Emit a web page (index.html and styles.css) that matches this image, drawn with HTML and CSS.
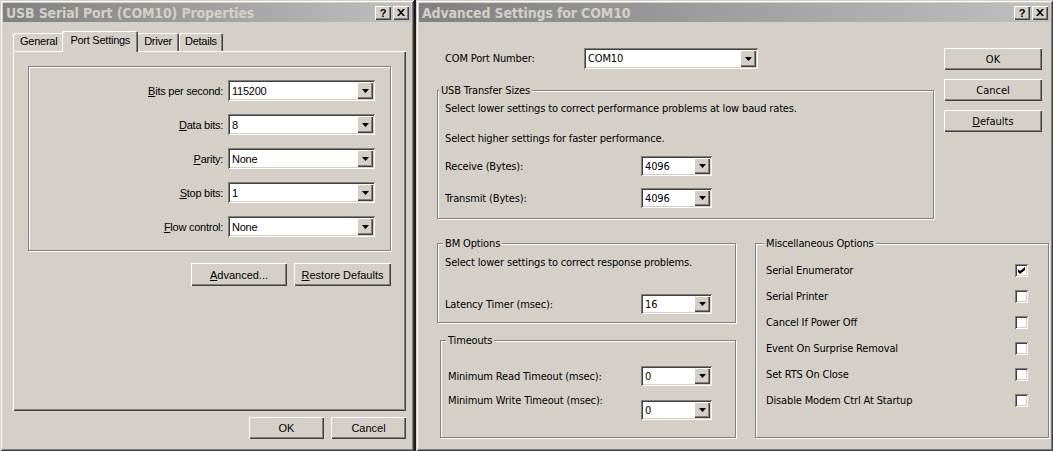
FILE: index.html
```html
<!DOCTYPE html>
<html lang="en">
<head>
  <meta charset="UTF-8">
  <title>USB Serial Port (COM10) Properties</title>
  <link rel="stylesheet" href="styles.css">
</head>
<body>
  <div class="screen">
    <!-- port properties dialog -->
    <div class="window win-props">
      <div class="titlebar">
        <span class="title">USB Serial Port (COM10) Properties</span>
        <div class="title-btns">
          <span class="tbtn">?</span>
          <span class="tbtn"><svg width="8" height="7" viewBox="0 0 8 7"><path d="M0 0h2l2 2.3 2-2.3h2L5 3.5 8 7H6L4 4.7 2 7H0l3-3.5z"/></svg></span>
        </div>
      </div>

      <div class="tabs">
        <span class="tab">General</span>
        <span class="tab active">Port Settings</span>
        <span class="tab">Driver</span>
        <span class="tab">Details</span>
      </div>

      <div class="tab-panel">
        <div class="settings-box">
          <label><u>B</u>its per second:</label>
          <div class="combo"><span class="combo-value">115200</span><span class="combo-btn"><svg width="7" height="4" viewBox="0 0 7 4"><path d="M0 0h7L3.5 4z"/></svg></span></div>

          <label><u>D</u>ata bits:</label>
          <div class="combo"><span class="combo-value">8</span><span class="combo-btn"><svg width="7" height="4" viewBox="0 0 7 4"><path d="M0 0h7L3.5 4z"/></svg></span></div>

          <label><u>P</u>arity:</label>
          <div class="combo"><span class="combo-value">None</span><span class="combo-btn"><svg width="7" height="4" viewBox="0 0 7 4"><path d="M0 0h7L3.5 4z"/></svg></span></div>

          <label><u>S</u>top bits:</label>
          <div class="combo"><span class="combo-value">1</span><span class="combo-btn"><svg width="7" height="4" viewBox="0 0 7 4"><path d="M0 0h7L3.5 4z"/></svg></span></div>

          <label><u>F</u>low control:</label>
          <div class="combo"><span class="combo-value">None</span><span class="combo-btn"><svg width="7" height="4" viewBox="0 0 7 4"><path d="M0 0h7L3.5 4z"/></svg></span></div>
        </div>

        <div class="btn-row">
          <button class="btn btn-advanced"><u>A</u>dvanced...</button>
          <button class="btn btn-restore"><u>R</u>estore Defaults</button>
        </div>
      </div>

      <div class="dialog-btns">
        <button class="btn btn-dialog">OK</button>
        <button class="btn btn-dialog">Cancel</button>
      </div>
    </div>

    <!-- advanced settings dialog -->
    <div class="window win-adv">
      <div class="titlebar">
        <span class="title">Advanced Settings for COM10</span>
        <div class="title-btns">
          <span class="tbtn">?</span>
          <span class="tbtn"><svg width="8" height="7" viewBox="0 0 8 7"><path d="M0 0h2l2 2.3 2-2.3h2L5 3.5 8 7H6L4 4.7 2 7H0l3-3.5z"/></svg></span>
        </div>
      </div>

      <div class="adv-body">
        <div class="adv-top">
          <div class="adv-main">
            <div class="com-row">
              <span class="com-label">COM Port Number:</span>
              <div class="combo combo-com"><span class="combo-value">COM10</span><span class="combo-btn"><svg width="7" height="4" viewBox="0 0 7 4"><path d="M0 0h7L3.5 4z"/></svg></span></div>
            </div>

            <fieldset class="group group-usb">
              <legend>USB Transfer Sizes</legend>
              <p class="note first">Select lower settings to correct performance problems at low baud rates.</p>
              <p class="note second">Select higher settings for faster performance.</p>
              <div class="field-row receive">
                <span>Receive (Bytes):</span>
                <div class="combo combo-sm"><span class="combo-value">4096</span><span class="combo-btn"><svg width="7" height="4" viewBox="0 0 7 4"><path d="M0 0h7L3.5 4z"/></svg></span></div>
              </div>
              <div class="field-row transmit">
                <span>Transmit (Bytes):</span>
                <div class="combo combo-sm"><span class="combo-value">4096</span><span class="combo-btn"><svg width="7" height="4" viewBox="0 0 7 4"><path d="M0 0h7L3.5 4z"/></svg></span></div>
              </div>
            </fieldset>
          </div>

          <div class="adv-buttons">
            <button class="btn btn-side">OK</button>
            <button class="btn btn-side">Cancel</button>
            <button class="btn btn-side"><u>D</u>efaults</button>
          </div>
        </div>

        <div class="adv-bottom">
          <div class="adv-left">
            <fieldset class="group group-bm">
              <legend>BM Options</legend>
              <p class="note first">Select lower settings to correct response problems.</p>
              <div class="field-row latency">
                <span>Latency Timer (msec):</span>
                <div class="combo combo-sm"><span class="combo-value">16</span><span class="combo-btn"><svg width="7" height="4" viewBox="0 0 7 4"><path d="M0 0h7L3.5 4z"/></svg></span></div>
              </div>
            </fieldset>

            <fieldset class="group group-timeouts">
              <legend>Timeouts</legend>
              <div class="field-row read">
                <span>Minimum Read Timeout (msec):</span>
                <div class="combo combo-sm"><span class="combo-value">0</span><span class="combo-btn"><svg width="7" height="4" viewBox="0 0 7 4"><path d="M0 0h7L3.5 4z"/></svg></span></div>
              </div>
              <div class="field-row write">
                <span class="raised-label">Minimum Write Timeout (msec):</span>
                <div class="combo combo-sm"><span class="combo-value">0</span><span class="combo-btn"><svg width="7" height="4" viewBox="0 0 7 4"><path d="M0 0h7L3.5 4z"/></svg></span></div>
              </div>
            </fieldset>
          </div>

          <fieldset class="group group-misc">
            <legend>Miscellaneous Options</legend>
            <div class="check-row"><span>Serial Enumerator</span><span class="checkbox"><svg width="7" height="7" viewBox="0 0 7 7"><path d="M0 2l2 2 5-4v3L2 7 0 5z"/></svg></span></div>
            <div class="check-row"><span>Serial Printer</span><span class="checkbox"></span></div>
            <div class="check-row"><span>Cancel If Power Off</span><span class="checkbox"></span></div>
            <div class="check-row"><span>Event On Surprise Removal</span><span class="checkbox"></span></div>
            <div class="check-row"><span>Set RTS On Close</span><span class="checkbox"></span></div>
            <div class="check-row"><span>Disable Modem Ctrl At Startup</span><span class="checkbox"></span></div>
          </fieldset>
        </div>
      </div>
    </div>
  </div>
</body>
</html>
```

FILE: styles.css
```css
* {
  margin: 0;
  padding: 0;
  box-sizing: border-box;
}

body {
  background: #1c1c1c;
  font-family: 'Liberation Sans', Arial, sans-serif;
  font-size: 11px;
  letter-spacing: -0.25px;
  color: #000;
}

.screen {
  display: flex;
  gap: 2px;
  width: 1053px;
  height: 451px;
}

/* window frame */
.window {
  background: #d4d0c8;
  height: 451px;
  padding: 3px;
  display: flex;
  flex-direction: column;
  box-shadow: inset 1px 1px #d4d0c8, inset -1px -1px #404040, inset 2px 2px #fff, inset -2px -2px #808080;
}

.win-props {
  width: 414px;
}

.win-adv {
  width: 637px;
  font-family: 'DejaVu Sans Condensed', 'DejaVu Sans', sans-serif;
  font-stretch: condensed;
  letter-spacing: -0.15px;
}

.titlebar {
  height: 19px;
  background: linear-gradient(to right, #808080, #c0c0c0);
  display: flex;
  align-items: center;
  justify-content: space-between;
  padding: 0 2px 0 3px;
}

.title {
  color: #d4d0c8;
  font-family: 'DejaVu Sans Condensed', 'DejaVu Sans', sans-serif;
  font-stretch: condensed;
  font-weight: bold;
  font-size: 14px;
  letter-spacing: -0.15px;
}

.title-btns {
  display: flex;
  gap: 2px;
}

.tbtn {
  width: 16px;
  height: 14px;
  background: #d4d0c8;
  display: flex;
  align-items: center;
  justify-content: center;
  font-family: 'Liberation Sans', Arial, sans-serif;
  font-weight: bold;
  font-size: 11px;
  letter-spacing: 0;
  box-shadow: inset 1px 1px #fff, inset -1px -1px #404040, inset -2px -2px #808080;
}

/* buttons and combos */
.btn {
  background: #d4d0c8;
  border: none;
  font: inherit;
  color: #000;
  box-shadow: inset 1px 1px #fff, inset -1px -1px #404040, inset -2px -2px #808080;
}

.combo {
  display: flex;
  align-items: center;
  height: 21px;
  padding: 2px;
  background: #fff;
  box-shadow: inset 1px 1px #808080, inset -1px -1px #fff, inset 2px 2px #404040, inset -2px -2px #d4d0c8;
}

.combo-value {
  flex: 1;
  padding-left: 2px;
}

.combo-btn {
  width: 16px;
  align-self: stretch;
  background: #d4d0c8;
  display: flex;
  align-items: center;
  justify-content: center;
  box-shadow: inset 1px 1px #fff, inset -1px -1px #404040, inset -2px -2px #808080;
}

/* port settings tab */
.tabs {
  display: flex;
  align-items: flex-end;
  height: 20px;
  margin-top: 9px;
  padding-left: 10px;
}

.tab {
  height: 18px;
  padding: 2px 7px 0;
  border-radius: 2px 2px 0 0;
  box-shadow: inset 1px 1px #fff, inset -1px 0 #404040, inset -2px 0 #808080;
}

.tab:last-child {
  padding: 2px 6px 0;
}

.tab.active {
  height: 21px;
  margin: 0 -1px -1px -2px;
  padding: 3px 8px 0;
  background: #d4d0c8;
  position: relative;
  z-index: 1;
}

.tab-panel {
  width: 393px;
  height: 360px;
  margin-left: 10px;
  padding: 15px;
  box-shadow: inset 1px 1px #fff, inset -1px -1px #404040, inset -2px -2px #808080;
}

.settings-box {
  display: grid;
  grid-template-columns: 1fr 147px;
  column-gap: 5px;
  row-gap: 13px;
  align-items: center;
  padding: 13px 15px 13px 0;
  border: 1px solid #808080;
  box-shadow: inset 1px 1px #fff, 1px 1px #fff;
}

.settings-box label {
  text-align: right;
}

.btn-row {
  display: flex;
  justify-content: flex-end;
  gap: 7px;
  margin-top: 12px;
}

.btn-advanced {
  width: 96px;
  height: 23px;
}

.btn-restore {
  width: 97px;
  height: 23px;
}

.dialog-btns {
  display: flex;
  justify-content: flex-end;
  gap: 7px;
  margin-top: 6px;
  padding-right: 5px;
}

.btn-dialog {
  width: 75px;
  height: 22px;
}

/* advanced settings */
.adv-body {
  padding: 26px 1px 0 18px;
}

.adv-top {
  display: flex;
  justify-content: space-between;
}

.adv-main {
  width: 497px;
}

.com-row {
  display: flex;
  align-items: center;
  padding-left: 8px;
}

.com-label {
  width: 139px;
}

.combo-com {
  width: 174px;
  height: 21px;
}

.adv-buttons {
  display: flex;
  flex-direction: column;
  gap: 9px;
  margin-right: 7px;
}

.btn-side {
  width: 98px;
  height: 22px;
}

.group {
  border: 1px solid #808080;
  box-shadow: inset 1px 1px #fff, 1px 1px #fff;
  padding: 0 7px;
}

.group legend {
  padding: 0 2px;
  margin-left: -2px;
  line-height: 13px;
  background: #d4d0c8;
}

.group-usb {
  margin-top: 15px;
  padding-bottom: 10px;
}

.group-usb legend {
  margin-left: -6px;
}

.note {
  line-height: 13px;
}

.note.first {
  margin-top: 5px;
}

.note.second {
  margin-top: 17px;
}

.field-row {
  display: grid;
  grid-template-columns: 196px 71px;
  align-items: center;
}

.combo-sm {
  height: 20px;
}

.field-row.receive {
  margin-top: 11px;
}

.field-row.transmit {
  margin-top: 12px;
}

.adv-bottom {
  display: flex;
  gap: 19px;
  margin-top: 18px;
}

.adv-left {
  width: 299px;
}

.group-bm {
  padding-bottom: 8px;
}

.group-bm .note.first {
  margin-top: 6px;
}

.field-row.latency {
  margin-top: 25px;
}

.group-timeouts {
  margin: 11px 0 0 3px;
  padding-bottom: 17px;
}

.group-timeouts .field-row {
  grid-template-columns: 193px 71px;
}

.field-row.read {
  margin-top: 19px;
}

.field-row.write {
  margin-top: 14px;
  align-items: start;
}

.raised-label {
  margin-top: -6px;
}

.group-misc {
  flex: 1;
  padding: 7px 20px 0 10px;
}

.check-row {
  display: flex;
  align-items: center;
  justify-content: space-between;
  height: 26px;
}

.checkbox {
  width: 13px;
  height: 13px;
  background: #fff;
  display: flex;
  align-items: center;
  justify-content: center;
  box-shadow: inset 1px 1px #808080, inset -1px -1px #fff, inset 2px 2px #404040, inset -2px -2px #d4d0c8;
}
```
